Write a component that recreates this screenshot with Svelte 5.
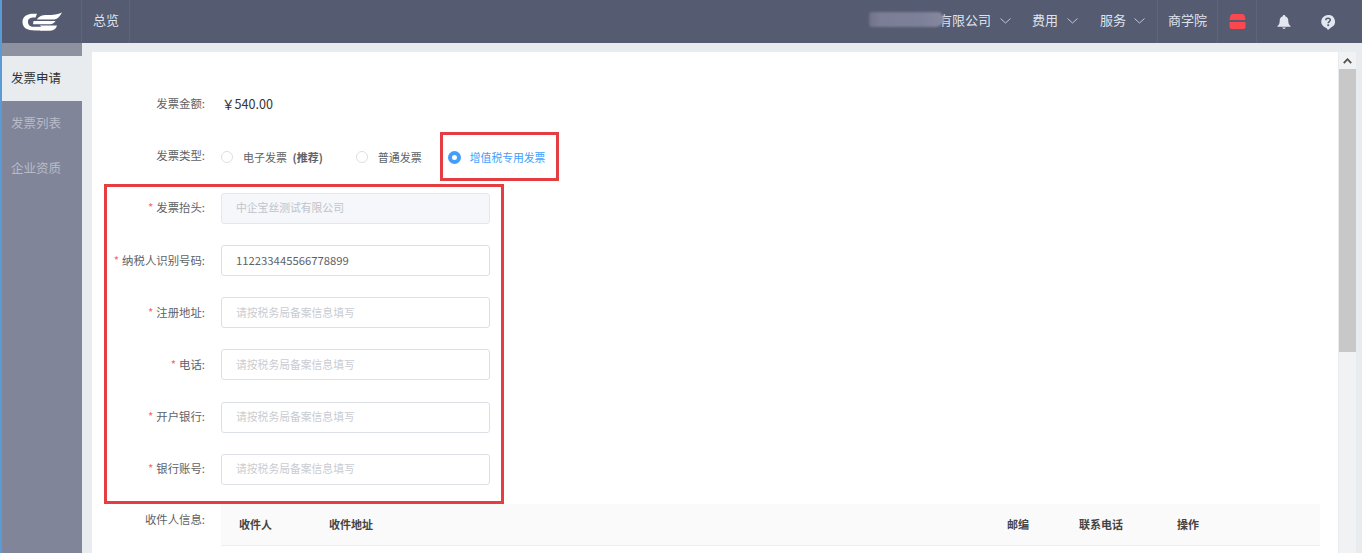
<script>
  const menu = [
    { name: '发票申请', active: true },
    { name: '发票列表' },
    { name: '企业资质' }
  ];
  const fields = [
    { label: '发票抬头', value: '中企宝丝测试有限公司', disabled: true },
    { label: '纳税人识别号码', value: '112233445566778899' },
    { label: '注册地址' },
    { label: '电话' },
    { label: '开户银行' },
    { label: '银行账号' }
  ];
  const hint = '请按税务局备案信息填写';
  const columns = ['收件人', '收件地址', '邮编', '联系电话', '操作'];
  let invoiceType = $state('vat');
</script>

<div class="page">
  <header class="top">
    <div class="logo">
      <svg width="40" height="20" viewBox="0 0 40 20">
        <path d="M15 1.8 C6 1 0.5 3.5 0.5 10 C0.5 15.8 5 18.5 13 18.5 L19.5 18.5 L21.5 14.8 L11.5 14.8 C8 14.8 6 13 6 10 C6 6.8 8.5 5.6 12 5.6 L13.5 5.6 Z" fill="#fff"/>
        <path d="M40 0.5 C36 2.6 31 3 25 3 C20 3.1 16.8 4.2 14.8 7.6 L32 7.6 C35 7.6 37.5 5 40 0.5 Z" fill="#fff"/>
        <path d="M11.5 9 L33.5 9 C32.5 11 30.5 12.2 28 12.2 L11 12.2 Z" fill="#fff"/>
        <path d="M17.5 13.6 L35 13.6 C34 17 32 18.8 28 18.8 L18 18.8 C20.5 17.5 21 15.5 17.5 13.6 Z" fill="#fff"/>
      </svg>
    </div>
    <a class="nav overview">总览</a>
    <div class="right">
      <span class="drop company">
        <span class="company-name">有限公司</span>
        <i class="smear"></i>
        <svg class="chev" width="11" height="6" viewBox="0 0 11 6"><path d="M0.5 0.5 L5.5 5 L10.5 0.5" /></svg>
      </span>
      <span class="drop fee">费用 <svg class="chev" width="11" height="6" viewBox="0 0 11 6"><path d="M0.5 0.5 L5.5 5 L10.5 0.5" /></svg></span>
      <span class="drop service">服务 <svg class="chev" width="11" height="6" viewBox="0 0 11 6"><path d="M0.5 0.5 L5.5 5 L10.5 0.5" /></svg></span>
      <a class="nav school">商学院</a>
      <span class="tool box">
        <svg width="17" height="15" viewBox="0 0 17 15">
          <path d="M4 0 H13 Q15.5 0 16 3 L16.5 6 H0.5 L1 3 Q1.5 0 4 0 Z" fill="#f9494f"/>
          <path d="M0.5 8 H16.5 V12.5 Q16.5 15 14 15 H3 Q0.5 15 0.5 12.5 Z" fill="#f9494f"/>
        </svg>
      </span>
      <span class="tool bell">
        <svg width="14" height="14" viewBox="0 0 14 14">
          <path d="M7 0 C7.8 0 8.2 .5 8.2 1.2 C10.4 1.8 11.3 3.6 11.3 6 C11.3 8.4 12 9.8 13.5 11 V11.8 H.5 V11 C2 9.8 2.7 8.4 2.7 6 C2.7 3.6 3.6 1.8 5.8 1.2 C5.8 .5 6.2 0 7 0 Z" fill="#e4e7f0"/>
          <path d="M5.3 12.6 H8.7 C8.5 13.5 7.8 14 7 14 C6.2 14 5.5 13.5 5.3 12.6 Z" fill="#e4e7f0"/>
        </svg>
      </span>
      <span class="tool help">
        <svg width="14" height="15" viewBox="0 0 14 15">
          <path d="M7 0 A6.8 6.6 0 0 1 10 12.6 L7 15 L5.4 13 A6.8 6.6 0 0 1 7 0 Z" fill="#e4e7f0"/>
          <path d="M4.8 5.2 C4.8 3.9 5.8 3.2 7 3.2 C8.3 3.2 9.3 4 9.3 5.1 C9.3 6.6 7.2 6.6 7.2 8.2" fill="none" stroke="#555b70" stroke-width="1.5"/>
          <rect x="6.3" y="9.3" width="1.8" height="1.8" fill="#555b70"/>
        </svg>
      </span>
    </div>
  </header>

  <div class="body">
    <aside class="side">
      <div class="side-top"></div>
      {#each menu as item}
        <a class="side-item" class:active={item.active}>{item.name}</a>
      {/each}
    </aside>

    <main class="main">
      <section class="panel">
        <div class="row">
          <span class="label">发票金额:</span>
          <span class="amount">￥540.00</span>
        </div>
        <div class="row type-row">
          <span class="label">发票类型:</span>
          <div class="radios">
            <label class="radio">
              <input type="radio" bind:group={invoiceType} value="electronic" />
              <i></i><span>电子发票 <b>(推荐)</b></span>
            </label>
            <label class="radio">
              <input type="radio" bind:group={invoiceType} value="normal" />
              <i></i><span>普通发票</span>
            </label>
            <label class="radio">
              <input type="radio" bind:group={invoiceType} value="vat" />
              <i></i><span>增值税专用发票</span>
            </label>
          </div>
          <div class="mark mark-type"></div>
        </div>

        <div class="fields">
          <div class="mark mark-fields"></div>
          {#each fields as f}
            <div class="row field">
              <span class="label"><em>*</em>{f.label}:</span>
              <input class="text" value={f.value ?? ''} placeholder={hint} disabled={f.disabled} />
            </div>
          {/each}
        </div>

        <div class="row receiver">
          <span class="label">收件人信息:</span>
          <div class="table-head">
            {#each columns as c}
              <span>{c}</span>
            {/each}
          </div>
        </div>
      </section>
      <div class="scrollbar">
        <div class="arrow">
          <svg width="9" height="6" viewBox="0 0 9 6"><path d="M0.8 5.2 L4.5 1.2 L8.2 5.2" /></svg>
        </div>
        <div class="thumb"></div>
      </div>
    </main>
  </div>
</div>

<style>
  :global(body) {
    margin: 0;
    overflow: hidden;
    font-family: "Noto Sans CJK SC", "Noto Sans", sans-serif;
  }
  .page {
    width: 1362px;
    height: 553px;
    overflow: hidden;
    border-left: 2px solid #5b9bd5;
    box-sizing: border-box;
  }
  .top {
    display: flex;
    align-items: stretch;
    height: 43px;
    background: #555b70;
    color: #dfe3ee;
    font-size: 13px;
  }
  .logo {
    width: 80px;
    display: flex;
    align-items: center;
    justify-content: center;
    border-right: 1px solid #5f6579;
    box-sizing: border-box;
  }
  .nav {
    display: flex;
    align-items: center;
    box-sizing: border-box;
    padding-bottom: 5px;
    color: #dfe3ee;
  }
  .overview {
    width: 48px;
    padding-left: 11px;
    border-right: 1px solid #5f6579;
  }
  .right {
    margin-left: auto;
    display: flex;
    align-items: center;
    height: 100%;
  }
  .drop {
    display: flex;
    align-items: center;
    gap: 9px;
    padding-bottom: 5px;
    white-space: nowrap;
  }
  .company { position: relative; margin-right: 21px; }
  .company-name { display: block; }
  .smear {
    position: absolute;
    left: -70px;
    top: 2px;
    width: 75px;
    height: 15px;
    border-radius: 4px 8px 10px 4px;
    background: linear-gradient(90deg, #6f7289 0, #7b7e96 15%, #7d8099 70%, #85889f 100%);
    filter: blur(1px);
  }
  .fee { margin-right: 22px; }
  .service { margin-right: 12px; gap: 8px; }
  .chev {
    margin-top: 4px;
  }
  .chev path {
    fill: none;
    stroke: #c4c8d6;
    stroke-width: 1;
  }
  .school {
    height: 100%;
    padding: 0 10px 5px;
    border-left: 1px solid #5f6579;
    border-right: 1px solid #5f6579;
  }
  .tool {
    display: flex;
    align-items: center;
    justify-content: center;
    height: 100%;
  }
  .box { width: 39px; border-right: 1px solid #5f6579; box-sizing: border-box; }
  .bell { width: 53px; padding-top: 1px; box-sizing: border-box; }
  .help { width: 35px; margin-right: 17px; padding-top: 1px; box-sizing: border-box; }

  .body {
    display: flex;
    height: 510px;
  }
  .side {
    width: 80px;
    flex: none;
    background: #80859a;
  }
  .side-top {
    height: 13px;
    background: #8e919f;
  }
  .side-item {
    display: flex;
    align-items: center;
    box-sizing: border-box;
    height: 45px;
    padding: 0 0 2px 9px;
    font-size: 12.5px;
    color: #b9bcc8;
  }
  .side-item.active {
    background: #e9ecee;
    color: #333;
  }
  .main {
    flex: 1;
    display: flex;
    align-items: flex-start;
    padding: 9px 0 0 10px;
    background: #e9ecee;
  }
  .panel {
    width: 1246px;
    height: 501px;
    box-sizing: border-box;
    padding-top: 36px;
    background: #fff;
    overflow: hidden;
  }
  .row {
    display: flex;
    align-items: center;
    height: 32px;
    position: relative;
  }
  .label {
    width: 113px;
    margin-right: 16px;
    padding-bottom: 2px;
    flex: none;
    text-align: right;
    font-size: 11.4px;
    color: #606266;
  }
  .label em {
    margin-right: 3px;
    color: #f56c6c;
    font-style: normal;
  }
  .amount {
    margin-left: 1px;
    padding-bottom: 2px;
    font-size: 12.6px;
    color: #333;
  }
  .type-row {
    margin-top: 21px;
    margin-bottom: 19.9px;
  }
  .type-row .label {
    padding-bottom: 4px;
  }
  .radios {
    display: flex;
    font-size: 11px;
    color: #606266;
  }
  .radio {
    display: flex;
    align-items: center;
    margin-right: 33px;
  }
  .radio input {
    display: none;
  }
  .radio i {
    width: 12px;
    height: 12px;
    margin-right: 10px;
    box-sizing: border-box;
    border: 1px solid #dcdfe6;
    border-radius: 50%;
  }
  .radio b { margin-left: 3px; font-weight: 700; }
  .radio:has(input:checked) {
    color: #409eff;
    margin-right: 0;
    margin-left: -7px;
    font-size: 10.8px;
  }
  .radio:has(input:checked) i {
    width: 13px;
    height: 13px;
    margin-right: 9px;
    border: 4px solid #409eff;
    background: #fff;
  }
  .mark {
    position: absolute;
    box-sizing: border-box;
    border: 3px solid #e53e42;
    pointer-events: none;
  }
  .mark-type {
    left: 348px;
    top: -9px;
    width: 119px;
    height: 49px;
  }
  .fields {
    position: relative;
  }
  .mark-fields {
    left: 12px;
    top: -9px;
    width: 400px;
    height: 320px;
    z-index: 1;
  }
  .field {
    height: 31px;
    margin-bottom: 21.18px;
  }
  .text {
    width: 269px;
    height: 31px;
    padding: 0 14px 2px;
    box-sizing: border-box;
    border: 1px solid #dcdfe6;
    border-radius: 3px;
    outline: none;
    font: inherit;
    font-size: 11.3px;
    color: #606266;
    background: #fff;
  }
  .text::placeholder { color: #c9ccd3; font-size: 10.8px; }
  .text:disabled {
    font-size: 10.8px;
    background: #f5f7fa;
    border-color: #e4e7ed;
    color: #c0c4cc;
  }
  .receiver {
    height: 42px;
    margin-top: -1.9px;
    align-items: flex-start;
  }
  .receiver .label {
    line-height: 30px;
  }
  .table-head {
    width: 1099px;
    height: 42px;
    box-sizing: border-box;
    padding: 0 0 1px 18px;
    display: grid;
    grid-template-columns: 90px 678px 72px 98px 1fr;
    align-items: center;
    background: #fafafa;
    border-bottom: 1px solid #ebeef5;
    font-size: 11px;
    font-weight: 700;
    color: #444;
  }
  .scrollbar {
    width: 17px;
    height: 501px;
    margin-left: 1px;
    flex: none;
    background: #f1f2f3;
  }
  .arrow {
    height: 17px;
    display: flex;
    align-items: center;
    justify-content: center;
    background: #f1f2f3;
  }
  .arrow path {
    fill: none;
    stroke: #505050;
    stroke-width: 1.8;
  }
  .thumb {
    height: 283px;
    background: #c8c8c8;
  }
</style>
